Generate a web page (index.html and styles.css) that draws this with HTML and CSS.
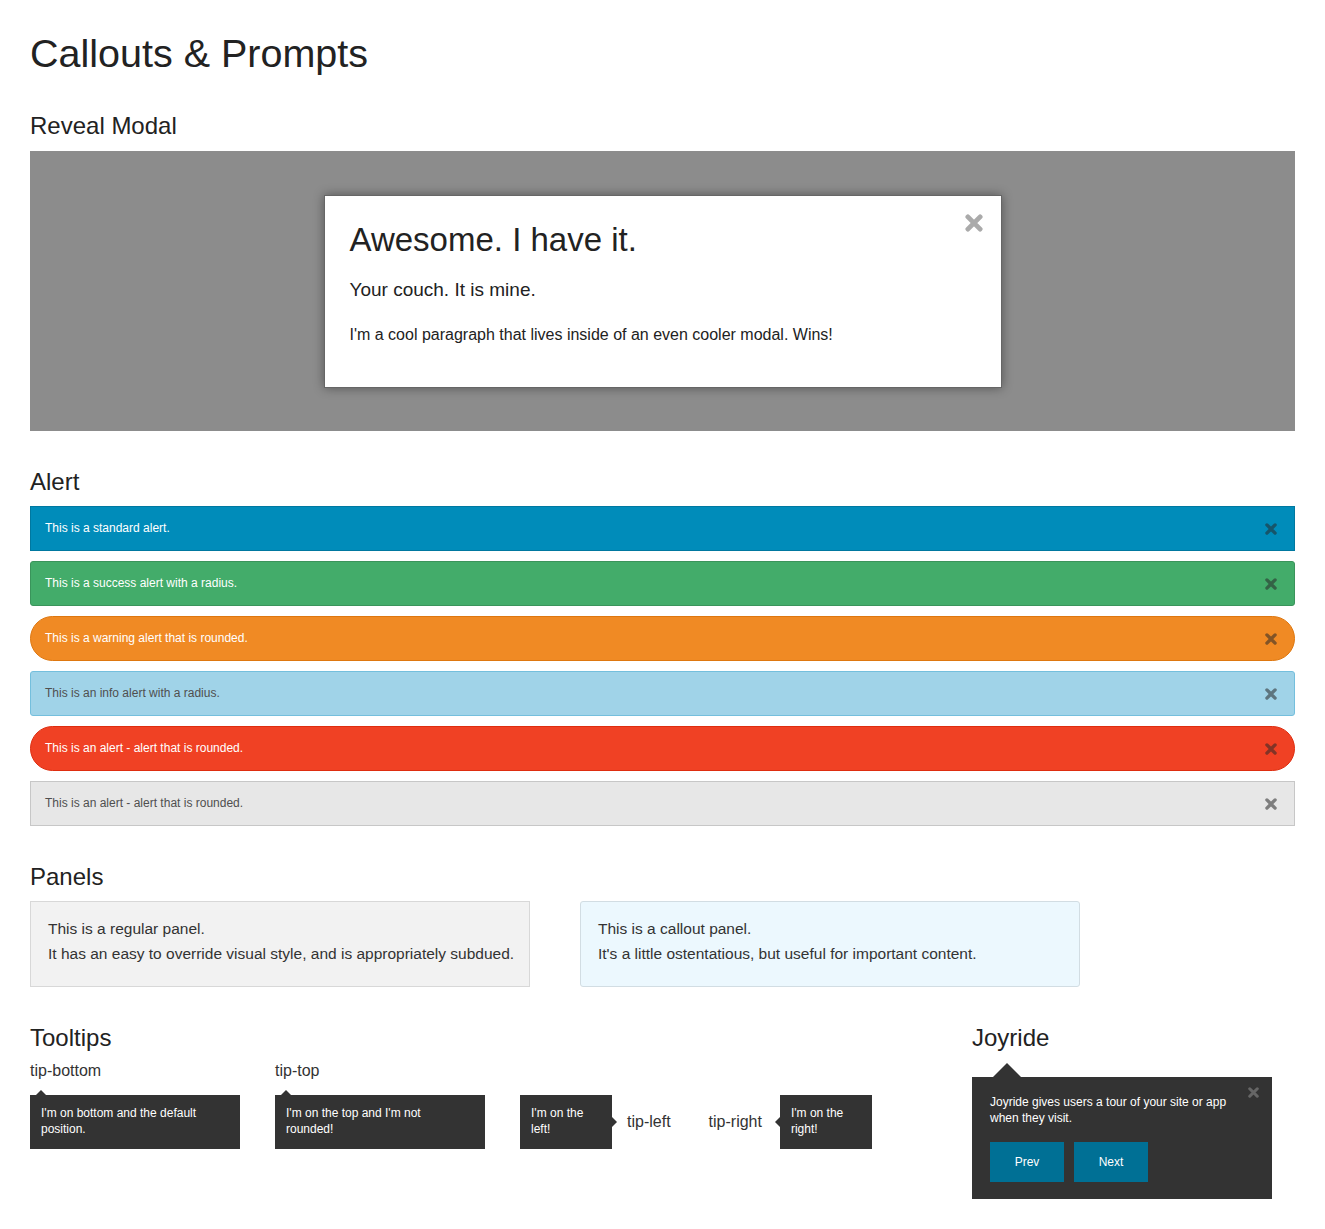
FILE: index.html
```html
<!DOCTYPE html>
<html lang="en">
<head>
<meta charset="utf-8">
<title>Callouts &amp; Prompts</title>
<link rel="stylesheet" href="styles.css">
</head>
<body>
<h1 class="page-title">Callouts &amp; Prompts</h1>

<h2 class="section-title first">Reveal Modal</h2>
<div class="modal-stage">
  <div class="modal">
    <h3 class="modal-title">Awesome. I have it.</h3>
    <p class="modal-lead">Your couch. It is mine.</p>
    <p class="modal-text">I'm a cool paragraph that lives inside of an even cooler modal. Wins!</p>
    <span class="modal-close"><svg viewBox="0 0 10 10" width="18" height="18"><path d="M1.6 1.6 L8.4 8.4 M8.4 1.6 L1.6 8.4" stroke="currentColor" stroke-width="2.7" stroke-linecap="round"/></svg></span>
  </div>
</div>

<h2 class="section-title">Alert</h2>
<div class="alerts">
  <div class="alert alert-primary">This is a standard alert.<span class="alert-close"><svg viewBox="0 0 10 10" width="12" height="12"><path d="M1.6 1.6 L8.4 8.4 M8.4 1.6 L1.6 8.4" stroke="currentColor" stroke-width="2.8" stroke-linecap="round"/></svg></span></div>
  <div class="alert alert-success radius">This is a success alert with a radius.<span class="alert-close"><svg viewBox="0 0 10 10" width="12" height="12"><path d="M1.6 1.6 L8.4 8.4 M8.4 1.6 L1.6 8.4" stroke="currentColor" stroke-width="2.8" stroke-linecap="round"/></svg></span></div>
  <div class="alert alert-warning round">This is a warning alert that is rounded.<span class="alert-close"><svg viewBox="0 0 10 10" width="12" height="12"><path d="M1.6 1.6 L8.4 8.4 M8.4 1.6 L1.6 8.4" stroke="currentColor" stroke-width="2.8" stroke-linecap="round"/></svg></span></div>
  <div class="alert alert-info radius">This is an info alert with a radius.<span class="alert-close"><svg viewBox="0 0 10 10" width="12" height="12"><path d="M1.6 1.6 L8.4 8.4 M8.4 1.6 L1.6 8.4" stroke="currentColor" stroke-width="2.8" stroke-linecap="round"/></svg></span></div>
  <div class="alert alert-alert round">This is an alert - alert that is rounded.<span class="alert-close"><svg viewBox="0 0 10 10" width="12" height="12"><path d="M1.6 1.6 L8.4 8.4 M8.4 1.6 L1.6 8.4" stroke="currentColor" stroke-width="2.8" stroke-linecap="round"/></svg></span></div>
  <div class="alert alert-secondary">This is an alert - alert that is rounded.<span class="alert-close"><svg viewBox="0 0 10 10" width="12" height="12"><path d="M1.6 1.6 L8.4 8.4 M8.4 1.6 L1.6 8.4" stroke="currentColor" stroke-width="2.8" stroke-linecap="round"/></svg></span></div>
</div>

<h2 class="section-title">Panels</h2>
<div class="panels">
  <div class="panel">
    <p>This is a regular panel.</p>
    <p>It has an easy to override visual style, and is appropriately subdued.</p>
  </div>
  <div class="panel callout">
    <p>This is a callout panel.</p>
    <p>It's a little ostentatious, but useful for important content.</p>
  </div>
</div>

<div class="lower">
  <div class="tooltips-col">
    <h2 class="section-title tight">Tooltips</h2>
    <div class="tips">
      <div class="tip-group">
        <div class="tip-label">tip-bottom</div>
        <div class="tooltip wide nub-top">I'm on bottom and the default position.</div>
      </div>
      <div class="tip-group">
        <div class="tip-label">tip-top</div>
        <div class="tooltip wide nub-top">I'm on the top and I'm not rounded!</div>
      </div>
      <div class="tip-inline">
        <div class="tooltip narrow nub-right">I'm on the left!</div>
        <span class="tip-text left-text">tip-left</span>
      </div>
      <div class="tip-inline">
        <span class="tip-text right-text">tip-right</span>
        <div class="tooltip narrow nub-left">I'm on the right!</div>
      </div>
    </div>
  </div>
  <div class="joyride-col">
    <h2 class="section-title tight">Joyride</h2>
    <div class="joyride">
      <p>Joyride gives users a tour of your site or app when they visit.</p>
      <div class="joy-buttons">
        <span class="joy-btn">Prev</span>
        <span class="joy-btn">Next</span>
      </div>
      <span class="joy-close"><svg viewBox="0 0 10 10" width="11" height="11"><path d="M1.6 1.6 L8.4 8.4 M8.4 1.6 L1.6 8.4" stroke="currentColor" stroke-width="2.8" stroke-linecap="round"/></svg></span>
    </div>
  </div>
</div>
</body>
</html>
```

FILE: styles.css
```css
* { box-sizing: border-box; }

body {
  margin: 0;
  padding: 0 30px 30px;
  font-family: "Liberation Sans", Arial, Helvetica, sans-serif;
  color: #222;
  background: #fff;
}

.page-title {
  font-size: 39.5px;
  line-height: 48px;
  font-weight: normal;
  margin: 29px 0 0;
}

.section-title {
  font-size: 24px;
  line-height: 28px;
  font-weight: normal;
  margin: 37px 0 10px;
}
.section-title.first { margin-top: 35px; margin-bottom: 11px; }
.section-title.tight { margin-bottom: 0; }

/* Modal */
.modal-stage {
  background: #8c8c8c;
  padding: 44px 0 43px;
  display: flex;
  justify-content: center;
}
.modal {
  position: relative;
  width: 678px;
  background: #fff;
  border: 1px solid #666;
  box-shadow: 0 0 10px rgba(0,0,0,0.4);
  padding: 25px 25px 41px;
}
.modal-title {
  font-size: 33px;
  line-height: 38px;
  font-weight: normal;
  margin: 0;
  color: #222;
}
.modal-lead {
  font-size: 19px;
  line-height: 24px;
  margin: 19px 0 0;
  color: #222;
}
.modal-text {
  font-size: 16px;
  line-height: 22px;
  margin: 22px 0 0;
  color: #222;
}
.modal-close {
  position: absolute;
  top: 18px;
  right: 18px;
  color: #aaa;
  display: flex;
}

/* Alerts */
.alert {
  position: relative;
  border: 1px solid;
  font-size: 12px;
  line-height: 16px;
  padding: 13px 40px 14px 14px;
  margin-bottom: 10px;
}
.alert:last-child { margin-bottom: 0; }
.alert.radius { border-radius: 3px; }
.alert.round { border-radius: 1000px; }
.alert-primary { background: #008cba; border-color: #0078a0; color: #fff; }
.alert-success { background: #43ac6a; border-color: #3a945b; color: #fff; }
.alert-warning { background: #f08a24; border-color: #de770f; color: #fff; }
.alert-info { background: #a0d3e8; border-color: #74bfdd; color: #4f4f4f; }
.alert-alert { background: #f04124; border-color: #de2d0f; color: #fff; }
.alert-secondary { background: #e7e7e7; border-color: #c7c7c7; color: #4f4f4f; }
.alert-close {
  position: absolute;
  right: 17px;
  top: 50%;
  margin-top: -6px;
  display: flex;
  color: rgba(40,40,40,0.55);
}

/* Panels */
.panels {
  display: flex;
  gap: 50px;
}
.panel {
  width: 500px;
  background: #f2f2f2;
  border: 1px solid #d8d8d8;
  padding: 14px 8px 20px 17px;
  color: #333;
  font-size: 15.5px;
  line-height: 25px;
}
.panel p { margin: 0; white-space: nowrap; }
.panel.callout {
  background: #ecf8fe;
  border-color: #d2dde3;
  border-radius: 3px;
}

/* Lower row */
.lower {
  display: flex;
}
.tooltips-col { flex: 1; }
.joyride-col { width: 323px; }

.tips {
  display: flex;
  align-items: flex-end;
  gap: 35px;
  padding-top: 8px;
}
.tip-label {
  font-size: 16px;
  line-height: 22px;
  color: #333;
  margin-bottom: 13px;
}
.tip-inline {
  display: flex;
  align-items: center;
}
.tip-text {
  font-size: 16px;
  line-height: 22px;
  color: #333;
}
.left-text { margin-left: 15px; margin-right: 3px; }
.right-text { margin-right: 18px; }

.tooltip {
  position: relative;
  background: #333;
  color: #fff;
  font-size: 12px;
  line-height: 16px;
}
.tooltip.wide { width: 210px; padding: 10px 30px 12px 11px; }
.tooltip.narrow { width: 92px; padding: 10px 20px 12px 11px; }
.tooltip::before {
  content: "";
  position: absolute;
  border: 5px solid transparent;
}
.nub-top::before {
  top: -10px;
  left: 6px;
  border-bottom-color: #333;
}
.nub-right::before {
  right: -10px;
  top: 50%;
  margin-top: -5px;
  border-left-color: #333;
}
.nub-left::before {
  left: -10px;
  top: 50%;
  margin-top: -5px;
  border-right-color: #333;
}

/* Joyride */
.joyride {
  position: relative;
  width: 300px;
  margin-top: 25px;
  background: #333;
  padding: 17px 18px;
}
.joyride::before {
  content: "";
  position: absolute;
  top: -28px;
  left: 21px;
  border: 14px solid transparent;
  border-bottom-color: #333;
}
.joyride p {
  margin: 0;
  color: #fff;
  font-size: 12px;
  line-height: 16px;
  padding-right: 2px;
}
.joy-buttons {
  display: flex;
  gap: 10px;
  margin-top: 16px;
}
.joy-btn {
  width: 74px;
  height: 40px;
  background: #007095;
  color: #fff;
  font-size: 12px;
  display: flex;
  align-items: center;
  justify-content: center;
}
.joy-close {
  position: absolute;
  top: 10px;
  right: 13px;
  display: flex;
  color: #666;
}
```
